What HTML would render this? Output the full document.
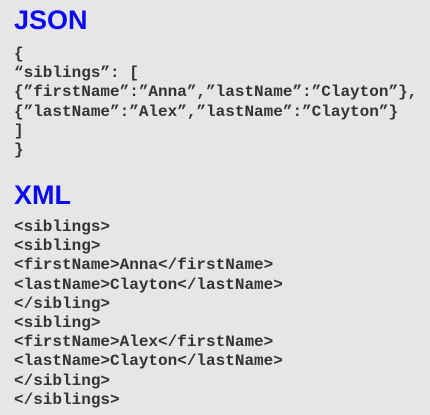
<!DOCTYPE html>
<html><head><meta charset="utf-8"><style>
html,body{margin:0;padding:0;}
body{width:430px;height:415px;background:#e6e6e6;position:relative;overflow:hidden;}
.t{position:absolute;left:14px;font:bold 27px/27px "Liberation Sans",sans-serif;color:#0a0af0;}
pre{position:absolute;left:14px;margin:0;font:bold 16px/19.2px "Liberation Mono",monospace;color:#333;}
</style></head><body>
<div class="t" style="top:7px">JSON</div>
<pre style="top:45px">{
“siblings”: [
{”firstName”:”Anna”,”lastName”:”Clayton”},
{”lastName”:”Alex”,”lastName”:”Clayton”}
]
}</pre>
<div class="t" style="top:182px">XML</div>
<pre style="top:218px">&lt;siblings&gt;
&lt;sibling&gt;
&lt;firstName&gt;Anna&lt;/firstName&gt;
&lt;lastName&gt;Clayton&lt;/lastName&gt;
&lt;/sibling&gt;
&lt;sibling&gt;
&lt;firstName&gt;Alex&lt;/firstName&gt;
&lt;lastName&gt;Clayton&lt;/lastName&gt;
&lt;/sibling&gt;
&lt;/siblings&gt;</pre>
</body></html>
